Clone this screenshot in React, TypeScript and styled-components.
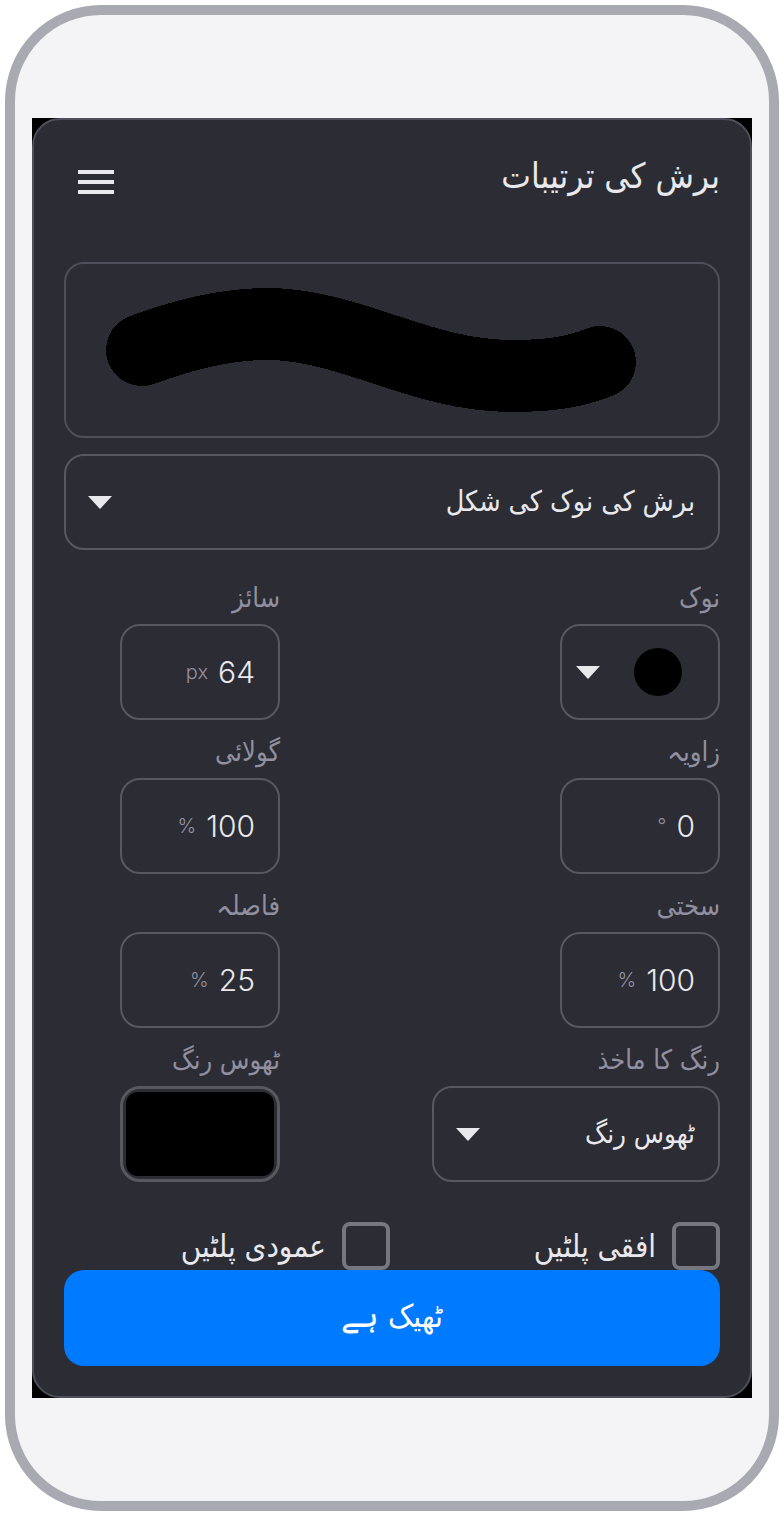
import React from 'react'
import styled, { createGlobalStyle } from 'styled-components'

const GlobalStyle = createGlobalStyle`
  html, body {
    margin: 0;
    padding: 0;
    background: #fff;
  }
  * {
    box-sizing: border-box;
  }
`

const Phone = styled.div`
  width: 774px;
  height: 1506px;
  margin: 5px;
  border: 10px solid #a9a9b2;
  border-radius: 96px;
  background: #f4f4f7;
  display: flex;
  align-items: center;
  justify-content: center;
`

const Screen = styled.div`
  width: 720px;
  height: 1280px;
  background: #000;
`

const Dialog = styled.div`
  direction: rtl;
  width: 100%;
  height: 100%;
  padding: 0 30px 30px;
  display: flex;
  flex-direction: column;
  background: #2c2c34;
  border: 2px solid #4f4f5b;
  border-radius: 28px;
  font-family: Inter, "DejaVu Sans Condensed", sans-serif;
  color: #e8e8ed;
`

const Header = styled.header`
  height: 124px;
  margin-bottom: 18px;
  display: flex;
  align-items: center;
  justify-content: space-between;
`

const Title = styled.h1`
  margin: 0 0 14px;
  font-size: 35px;
  font-weight: 400;
  line-height: 40px;
`

const Hamburger = styled.div`
  width: 36px;
  margin-left: 14px;
  display: flex;
  flex-direction: column;
  gap: 6px;
  span {
    display: block;
    height: 4px;
    background: #e8e8ed;
  }
`

const Preview = styled.div`
  height: 176px;
  border: 2px solid #4f4f5b;
  border-radius: 20px;
  svg {
    display: block;
    width: 100%;
    height: 100%;
  }
`

const SelectBox = styled.div<{ $left?: number; $right?: number; $size?: number }>`
  height: 96px;
  padding: 0 ${props => props.$right ?? 23}px 0 ${props => props.$left ?? 22}px;
  display: flex;
  align-items: center;
  justify-content: space-between;
  border: 2px solid #58585e;
  border-radius: 20px;
  font-size: ${props => props.$size ?? 28.4}px;
`

const ShapeSelect = styled(SelectBox)`
  margin-top: 16px;
  margin-bottom: 30px;
`

const SelectText = styled.span`
  padding-bottom: 3px;
`

const Caret = styled.span`
  width: 0;
  height: 0;
  border-left: 12px solid transparent;
  border-right: 12px solid transparent;
  border-top: 13px solid #e8e8ed;
`

const Grid = styled.div`
  display: grid;
  grid-template-columns: 1fr 216px;
  row-gap: 14px;
`

const Field = styled.div<{ $width?: number }>`
  width: ${props => props.$width ?? 160}px;
`

const FieldLabel = styled.div`
  height: 36px;
  margin-bottom: 8px;
  font-size: 27px;
  line-height: 36px;
  color: #9090a0;
  white-space: nowrap;
`

const ValueBox = styled.div`
  height: 96px;
  padding: 0 23px;
  display: flex;
  align-items: center;
  gap: 10px;
  border: 2px solid #58585e;
  border-radius: 20px;
`

const Value = styled.span`
  font-size: 30px;
  font-weight: 300;
`

const Unit = styled.span`
  font-size: 20px;
  font-weight: 300;
  color: #9090a0;
`

const Dot = styled.span`
  width: 48px;
  height: 48px;
  border-radius: 50%;
  background: #000;
`

const Swatch = styled.div`
  height: 96px;
  padding: 3px;
  border: 3px solid #58585e;
  border-radius: 20px;
  div {
    height: 100%;
    background: #000;
    border-radius: 12px;
  }
`

const Checks = styled.div`
  margin-top: 40px;
  display: grid;
  grid-template-columns: 330px auto;
`

const CheckItem = styled.label`
  display: flex;
  align-items: center;
  gap: 16px;
  font-size: 31px;
  line-height: 42px;
  white-space: nowrap;
`

const CheckBox = styled.span`
  flex: none;
  width: 48px;
  height: 48px;
  border: 4px solid #77777f;
  border-radius: 8px;
`

const OkButton = styled.button`
  height: 96px;
  padding: 0 0 6px;
  border: 0;
  border-radius: 20px;
  background: #007aff;
  color: #fff;
  font-family: inherit;
  font-size: 31.5px;
`

interface NumberFieldProps {
  label: string
  value: string
  unit: string
}

const NumberField: React.FC<NumberFieldProps> = ({ label, value, unit }) => (
  <Field>
    <FieldLabel>{label}</FieldLabel>
    <ValueBox>
      <Value>{value}</Value>
      <Unit>{unit}</Unit>
    </ValueBox>
  </Field>
)

const App: React.FC = () => (
  <Phone>
    <GlobalStyle />
    <Screen>
      <Dialog>
        <Header>
          <Title>برش کی ترتیبات</Title>
          <Hamburger>
            <span />
            <span />
            <span />
          </Hamburger>
        </Header>
        <Preview>
          <svg viewBox="0 0 652 172" shapeRendering="crispEdges">
            <path
              d="M76 86 C114 72 159 60 201 60 C284 60 354 112 446 112 C484 112 509 108 534 98"
              fill="none"
              stroke="#000"
              strokeWidth="72"
              strokeLinecap="round"
            />
          </svg>
        </Preview>
        <ShapeSelect>
          <SelectText>برش کی نوک کی شکل</SelectText>
          <Caret />
        </ShapeSelect>
        <Grid>
          <Field>
            <FieldLabel>نوک</FieldLabel>
            <SelectBox $left={14} $right={36}>
              <Dot />
              <Caret />
            </SelectBox>
          </Field>
          <NumberField label="سائز" value="64" unit="px" />
          <NumberField label="زاویہ" value="0" unit="°" />
          <NumberField label="گولائی" value="100" unit="%" />
          <NumberField label="سختی" value="100" unit="%" />
          <NumberField label="فاصلہ" value="25" unit="%" />
          <Field $width={288}>
            <FieldLabel>رنگ کا ماخذ</FieldLabel>
            <SelectBox $size={27.5}>
              <SelectText>ٹھوس رنگ</SelectText>
              <Caret />
            </SelectBox>
          </Field>
          <Field>
            <FieldLabel>ٹھوس رنگ</FieldLabel>
            <Swatch>
              <div />
            </Swatch>
          </Field>
        </Grid>
        <Checks>
          <CheckItem>
            <CheckBox />
            افقی پلٹیں
          </CheckItem>
          <CheckItem>
            <CheckBox />
            عمودی پلٹیں
          </CheckItem>
        </Checks>
        <OkButton>ٹھیک ہے</OkButton>
      </Dialog>
    </Screen>
  </Phone>
)

export default App
